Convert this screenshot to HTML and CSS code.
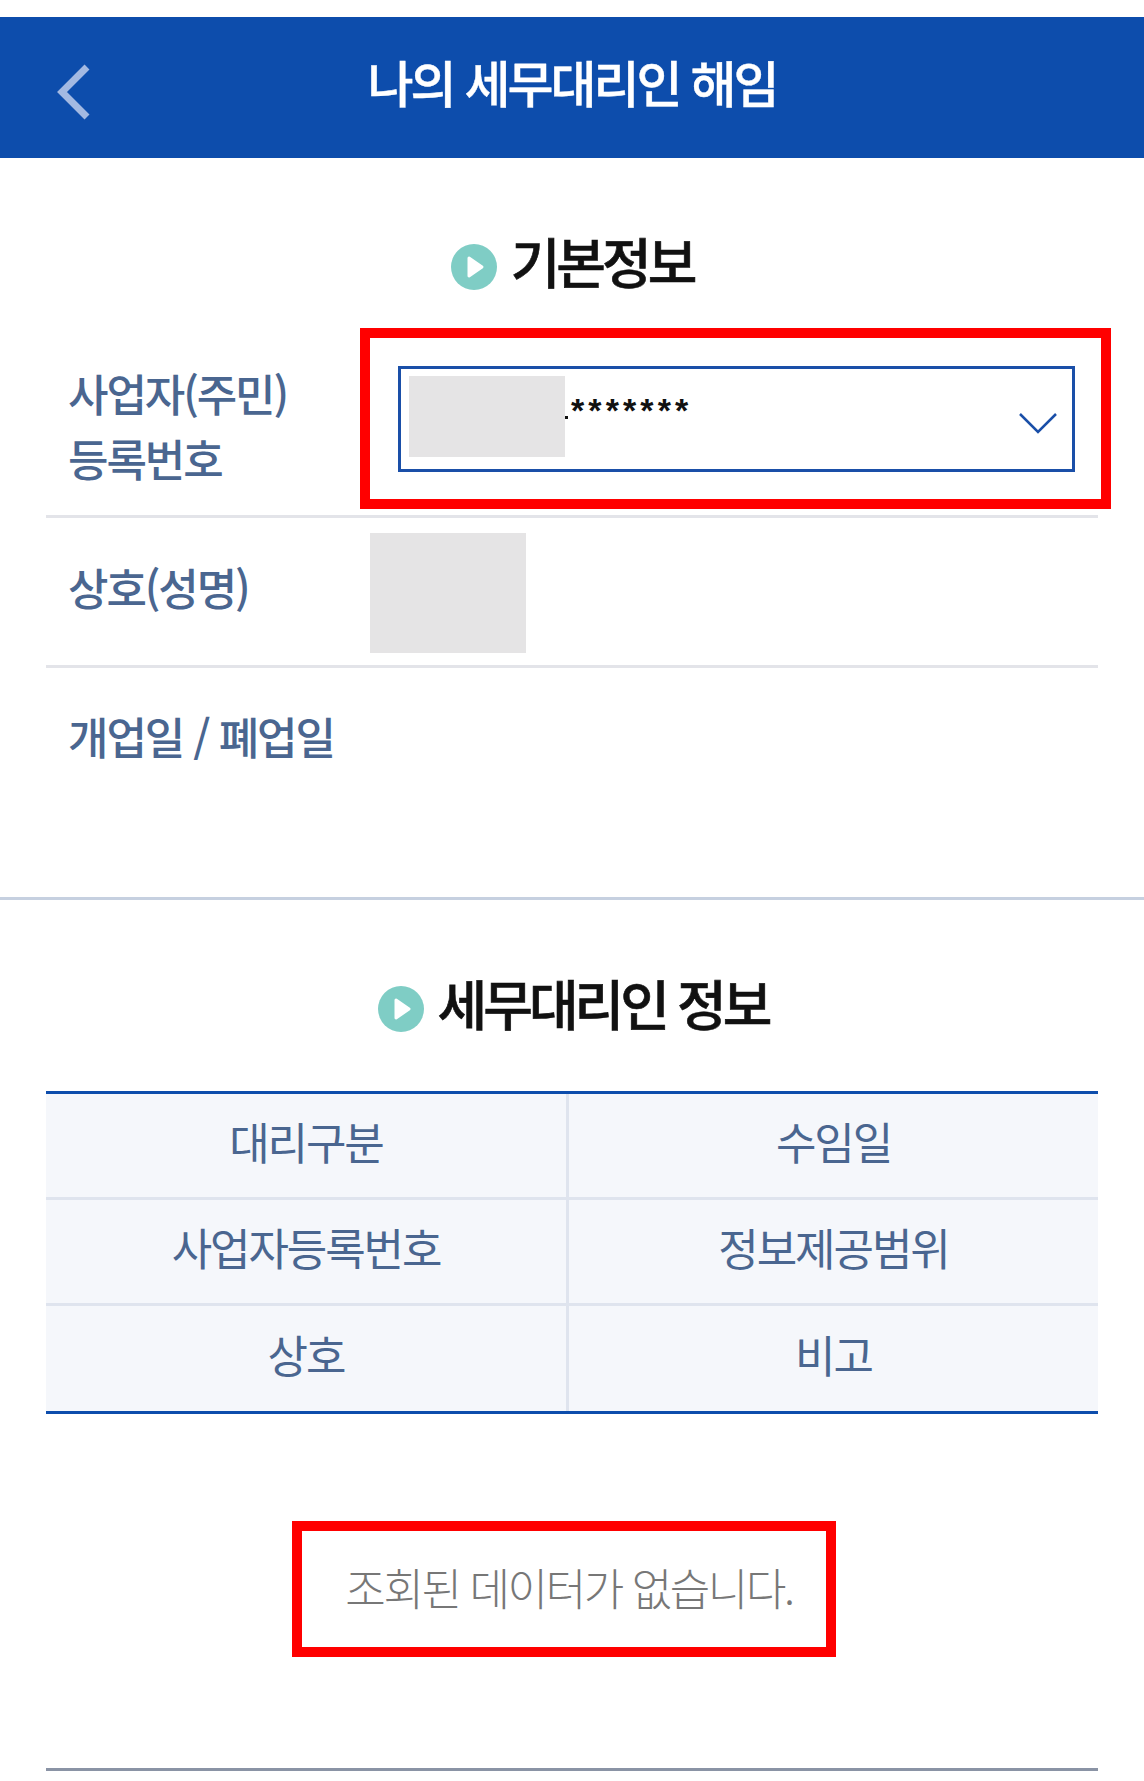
FILE: index.html
```html
<!DOCTYPE html>
<html lang="ko">

<head>
  <meta charset="UTF-8">
  <title>나의 세무대리인 해임</title>
  <link rel="stylesheet" href="styles.css">
</head>

<body>
  <!-- 상단 바 -->
  <header class="topbar">
    <svg class="back" width="34" height="56" viewBox="0 0 34 56">
      <path d="M31 3 L6 28 L31 53" fill="none" stroke="#a3b9e2" stroke-width="7" />
    </svg>
    <h1 class="title">나의 세무대리인 해임</h1>
  </header>

  <!-- 기본정보 -->
  <h2 class="heading heading-first">
    <svg class="dot" width="46" height="46" viewBox="0 0 46 46">
      <circle cx="23" cy="23" r="23" fill="#7fcdc5" />
      <path d="M18 14 L31 23 L18 32 Z" fill="#fff" stroke="#fff" stroke-width="3" stroke-linejoin="round" />
    </svg>
    기본정보
  </h2>
  <div class="info">
    <div class="row row-select">
      <div class="label">사업자(주민)<br>등록번호</div>
      <div class="mark mark-select">
        <div class="select">
          <div class="mask"></div>
          <span class="stop"></span>
          <span class="stars">*******</span>
          <svg class="arrow" width="38" height="22" viewBox="0 0 38 22">
            <path d="M1 2 L19 20 L37 2" fill="none" stroke="#1a4fa8" stroke-width="2.5" />
          </svg>
        </div>
      </div>
    </div>
    <div class="row row-name">
      <div class="label">상호(성명)</div>
      <div class="mask mask-name"></div>
    </div>
    <div class="row row-date">
      <div class="label">개업일 / 폐업일</div>
    </div>
  </div>

  <div class="divider"></div>

  <!-- 세무대리인 정보 -->
  <h2 class="heading heading-second">
    <svg class="dot" width="46" height="46" viewBox="0 0 46 46">
      <circle cx="23" cy="23" r="23" fill="#7fcdc5" />
      <path d="M18 14 L31 23 L18 32 Z" fill="#fff" stroke="#fff" stroke-width="3" stroke-linejoin="round" />
    </svg>
    세무대리인 정보
  </h2>
  <div class="table">
    <div class="cell">대리구분</div>
    <div class="cell">수임일</div>
    <div class="cell">사업자등록번호</div>
    <div class="cell">정보제공범위</div>
    <div class="cell">상호</div>
    <div class="cell">비고</div>
  </div>

  <div class="mark mark-empty">조회된 데이터가 없습니다.</div>

  <div class="bottom-line"></div>
</body>

</html>
```

FILE: styles.css
```css
* {
  margin: 0;
  padding: 0;
  box-sizing: border-box;
}

body {
  background: #fff;
  font-family: "Noto Sans CJK KR", "Liberation Sans", sans-serif;
}

.topbar {
  position: relative;
  height: 141px;
  margin-top: 17px;
  background: #0d4dac;
  display: flex;
  align-items: center;
  justify-content: center;
}

.back {
  position: absolute;
  left: 56px;
  top: 47px;
}

.title {
  font-size: 50px;
  font-weight: 500;
  letter-spacing: -3px;
  -webkit-text-stroke: 0.4px #fff;
  color: #fff;
  line-height: 1;
  padding-bottom: 14px;
}

.heading {
  display: flex;
  align-items: center;
  justify-content: center;
  font-size: 54px;
  font-weight: 500;
  letter-spacing: -4px;
  -webkit-text-stroke: 0.6px #111;
  line-height: 60px;
  color: #111;
}

.dot {
  margin-right: 14px;
  margin-top: 12px;
  flex: none;
}

.heading-first {
  padding-top: 73px;
}

.heading-second {
  padding-top: 73px;
  padding-left: 2px;
}

.info {
  margin: 37px 46px 0;
}

.row {
  display: flex;
  border-bottom: 3px solid #e3e4e9;
}

.label {
  width: 314px;
  padding-left: 22px;
  font-size: 44px;
  font-weight: 500;
  letter-spacing: -2.1px;
  line-height: 65px;
  color: #4a6690;
  flex: none;
}

.row-select {
  height: 190px;
}

.row-select .label {
  padding-top: 33px;
}

.row-name {
  height: 150px;
  padding-top: 15px;
}

.row-name .label {
  padding-top: 9px;
  line-height: 90px;
  width: 324px;
}

.row-date {
  height: 229px;
  border-bottom: none;
}

.row-date .label {
  width: auto;
  padding-top: 36px;
}

.mark {
  border: 10px solid #f00;
  background: #fff;
}

.mark-select {
  width: 751px;
  height: 181px;
  margin-right: -13px;
  padding: 28px 26px 28px 28px;
}

.select {
  position: relative;
  height: 106px;
  border: 3px solid #1a4fa8;
  display: flex;
  padding: 7px 8px;
}

.mask {
  width: 156px;
  height: 81px;
  background: #e5e4e5;
  flex: none;
}

.mask-name {
  height: 120px;
}

.stop {
  width: 3px;
  height: 3px;
  margin-top: 40px;
  background: #111;
  flex: none;
}

.stars {
  font-family: "Liberation Sans", sans-serif;
  font-size: 34px;
  font-weight: 700;
  letter-spacing: 4.1px;
  line-height: 34px;
  margin-left: 3px;
  margin-top: 17px;
  color: #111;
}

.arrow {
  position: absolute;
  right: 15px;
  top: 43px;
}

.divider {
  height: 3px;
  background: #c6d0e0;
}

.table {
  display: grid;
  grid-template-columns: 523px 1fr;
  margin: 58px 46px 0;
  border-top: 3px solid #0d4dac;
  border-bottom: 3px solid #0d4dac;
  background: #f5f7fb;
}

.cell {
  height: 106px;
  display: flex;
  align-items: center;
  justify-content: center;
  font-size: 44px;
  letter-spacing: -2.1px;
  color: #4a6690;
  padding-bottom: 10px;
  border-bottom: 3px solid #dfe4ee;
}

.cell:nth-child(odd) {
  border-right: 3px solid #dfe4ee;
}

.cell:nth-last-child(-n+2) {
  height: 105px;
  border-bottom: none;
}

.mark-empty {
  width: 544px;
  height: 136px;
  margin: 107px 0 0 292px;
  display: flex;
  align-items: center;
  justify-content: center;
  font-size: 44px;
  font-weight: 300;
  letter-spacing: -2.4px;
  color: #777;
  padding-bottom: 4px;
  padding-left: 10px;
  white-space: nowrap;
}

.bottom-line {
  height: 3px;
  margin: 111px 46px 0;
  background: #8a93a5;
}
```
